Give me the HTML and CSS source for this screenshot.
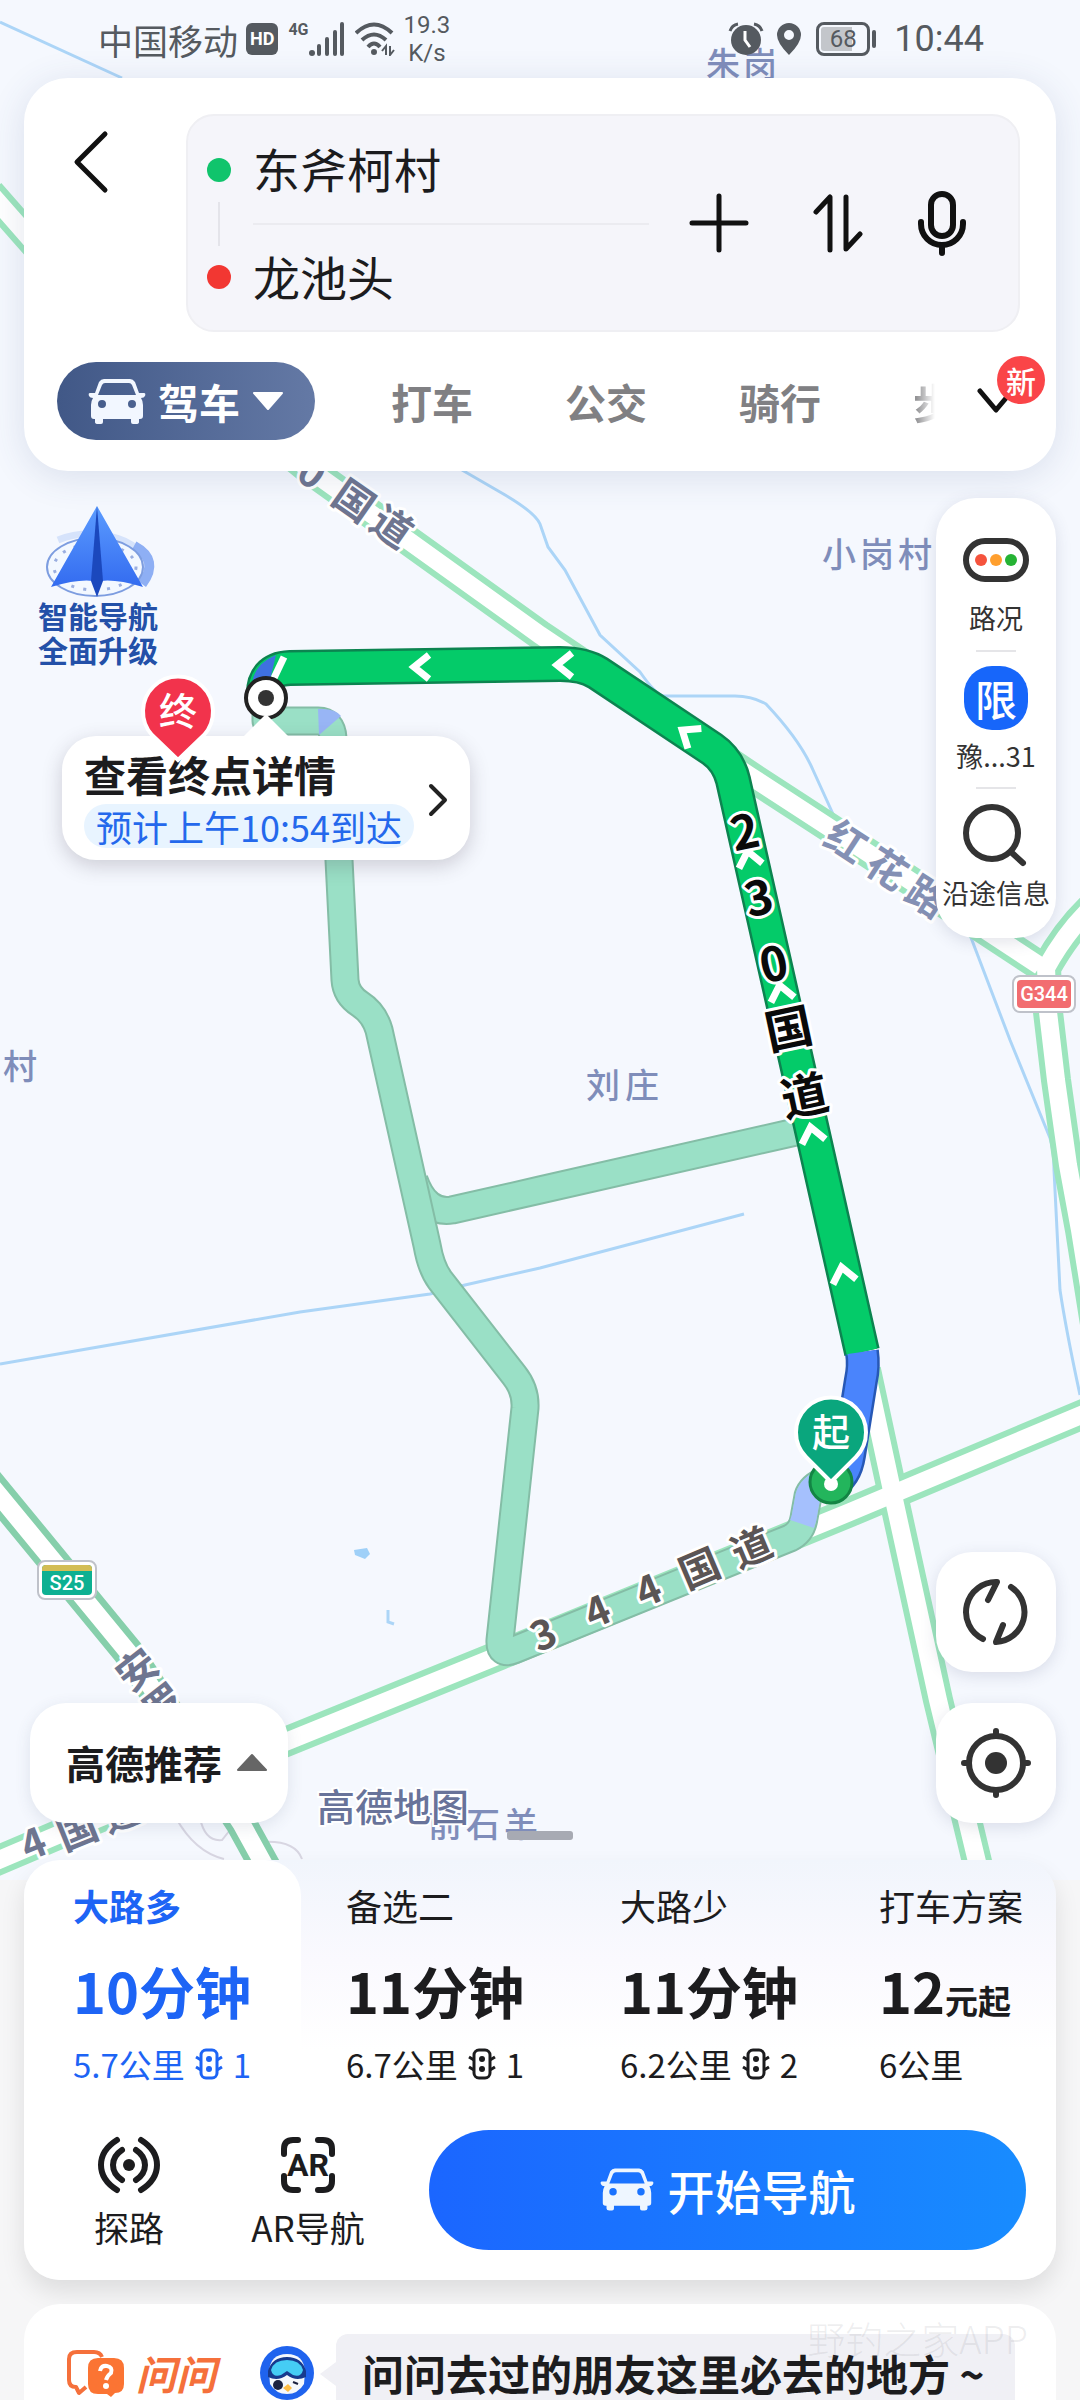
FILE: index.html
```html
<!DOCTYPE html>
<html lang="zh-CN">
  <head>
    <meta charset="UTF-8" />
    <meta name="viewport" content="width=device-width, initial-scale=1.0" />
    <title>驾车路线</title>
    <link rel="stylesheet" href="styles.css">
  </head>
  <body>
    <svg class="defs" width="0" height="0" aria-hidden="true">
      <symbol id="car" viewBox="0 0 58 46">
        <path fill-rule="evenodd" d="M16 1H42Q45 1 47 4L51 15L56 15Q58 15 57 18Q56 20 53 20Q55 23 55 27V38Q55 41 52 41H51V44Q51 46 48 46H45Q43 46 43 44V41H15V44Q15 46 13 46H10Q7 46 7 44V41H6Q3 41 3 38V27Q3 23 5 20Q2 20 1 18Q0 15 2 15H7L11 4Q13 1 16 1ZM17 5Q15 5 14 7L10 17H48L44 7Q43 5 41 5ZM14 22A4 4 0 1 0 14 30A4 4 0 1 0 14 22ZM44 22A4 4 0 1 0 44 30A4 4 0 1 0 44 22Z" />
      </symbol>
      <symbol id="light" viewBox="0 0 28 32">
        <g fill="none" stroke="currentColor" stroke-width="3">
          <rect x="6" y="2" width="16" height="28" rx="5" />
          <path d="M1 9L6 12M27 9L22 12M1 19L6 22M27 19L22 22" />
        </g>
        <circle cx="14" cy="11" r="3" fill="currentColor" />
        <circle cx="14" cy="21" r="3" fill="currentColor" />
      </symbol>
    </svg>

    <main class="app">
      <section class="map">
        <svg class="map-canvas" viewBox="0 0 1080 1880">
          <!-- water -->
          <g class="water">
            <path d="M0 22L122 78" />
            <path d="M462 470L500 492Q535 512 540 524L548 547L565 570L600 635L640 672Q656 695 664 696H735Q752 696 766 704Q800 740 813 770L838 825" />
            <path d="M970 935L1010 1040L1050 1138Q1054 1150 1054 1170L1060 1290Q1066 1330 1080 1395" />
            <path d="M0 1364L300 1312L430 1294L465 1285L540 1268L744 1214" />
            <path d="M388 1610V1622L394 1624" />
          </g>
          <path class="pond" d="M354 1550L367 1548L370 1554L365 1559L355 1555Z" />

          <!-- ramps -->
          <g class="ramp">
            <path d="M176 1818Q195 1852 224 1859" />
            <path d="M200 1818Q205 1842 222 1840L230 1830" />
            <path d="M262 1842Q295 1840 302 1859" />
          </g>

          <!-- roads -->
          <g class="road-edge">
            <path d="M-10 193L40 250L310 470L540 635L750 776L830 828L1040 966" />
            <path d="M1100 900Q1070 925 1046 968L1048 1012L1056 1080L1068 1165L1080 1230L1096 1330" />
            <path d="M-20 1868L60 1834L288 1741L500 1655L850 1512L1100 1407" />
            <path d="M866 1370L893 1495L938 1700L979 1870" />
          </g>
          <path class="road-edge expressway" d="M-20 1472L128 1652L241 1823L268 1872" />
          <g class="road-fill">
            <path d="M-10 193L40 250L310 470L540 635L750 776L830 828L1040 966" />
            <path d="M1100 900Q1070 925 1046 968L1048 1012L1056 1080L1068 1165L1080 1230L1096 1330" />
            <path d="M-20 1868L60 1834L288 1741L500 1655L850 1512L1100 1407" />
            <path d="M866 1370L893 1495L938 1700L979 1870" />
            <path d="M-20 1472L128 1652L241 1823L268 1872" />
          </g>

          <!-- alternative routes -->
          <path class="alt-edge" d="M414 1180Q426 1214 452 1210L540 1190L800 1131" />
          <path class="alt-fill" d="M414 1180Q426 1214 452 1210L540 1190L800 1131" />
          <path class="alt-edge" d="M266 698V721H318Q332 721 333 738L339 860L345 980Q346 995 360 1004Q374 1013 379 1030L427 1245Q431 1268 440 1280L514 1375Q526 1390 525 1408L500 1640Q499 1656 514 1650L790 1538Q802 1532 804 1518L808 1496Q811 1486 826 1480" />
          <path class="alt-fill" d="M266 698V721H318Q332 721 333 738L339 860L345 980Q346 995 360 1004Q374 1013 379 1030L427 1245Q431 1268 440 1280L514 1375Q526 1390 525 1408L500 1640Q499 1656 514 1650L790 1538Q802 1532 804 1518L808 1496Q811 1486 826 1480" />
          <path class="alt-blue" d="M802 1524L804 1518L808 1496Q811 1486 826 1480" />
          <path class="alt-blue-part" d="M318 709Q335 708 341 716L319 735Z" />

          <!-- chosen route -->
          <path class="route-edge" d="M264 698Q262 669 290 668L560 664Q584 664 598 673L712 749Q728 760 733 780L862 1352" />
          <path class="route-blue-edge" d="M862 1352Q864 1366 861 1380L849 1455Q846 1475 832 1483" />
          <path class="route-fill" d="M264 698Q262 669 290 668L560 664Q584 664 598 673L712 749Q728 760 733 780L862 1352" />
          <path class="route-blue" d="M862 1352Q864 1366 861 1380L849 1455Q846 1475 832 1483" />
          <path class="route-blue-part" d="M252 684Q254 664 276 655L269 684Z" />
          <g class="arrow">
            <path d="M284 657L274 678" />
            <path transform="translate(421 667)" d="M8-12L-7 0L8 12" />
            <path transform="translate(564 665)" d="M8-12L-7 0L8 12" />
            <path transform="translate(688 734) rotate(34)" d="M8-12L-7 0L8 12" />
            <path transform="translate(749 858) rotate(78)" d="M8-12L-7 0L8 12" />
            <path transform="translate(781 992) rotate(78)" d="M8-12L-7 0L8 12" />
            <path transform="translate(812 1134) rotate(78)" d="M8-12L-7 0L8 12" />
            <path transform="translate(843 1274) rotate(78)" d="M8-12L-7 0L8 12" />
          </g>

          <!-- road names -->
          <g class="road-name">
            <text transform="translate(311 474) rotate(35)" dy="13">0</text>
            <text transform="translate(353 502) rotate(35)" dy="13">国</text>
            <text transform="translate(391 528) rotate(35)" dy="13">道</text>
            <text transform="translate(138 1671) rotate(-38)" dy="13">安</text>
            <text transform="translate(165 1706) rotate(-38)" dy="13">罗</text>
            <text transform="translate(34 1845) rotate(-22)" dy="13">4</text>
            <text transform="translate(78 1832) rotate(-22)" dy="13">国</text>
            <text transform="translate(122 1814) rotate(-22)" dy="13">道</text>
          </g>
          <g class="road-name town-road">
            <text transform="translate(845 843) rotate(33)" dy="13">红</text>
            <text transform="translate(886 870) rotate(33)" dy="13">花</text>
            <text transform="translate(926 898) rotate(33)" dy="13">路</text>
          </g>
          <g class="road-name gray-road">
            <text transform="translate(544 1636) rotate(-23)" dy="13">3</text>
            <text transform="translate(598 1613) rotate(-23)" dy="13">4</text>
            <text transform="translate(649 1592) rotate(-23)" dy="13">4</text>
            <text transform="translate(700 1570) rotate(-23)" dy="13">国</text>
            <text transform="translate(752 1549) rotate(-23)" dy="13">道</text>
          </g>
          <g class="road-name route-road">
            <text transform="translate(745 833) rotate(-12)" dy="16">2</text>
            <text transform="translate(759 899) rotate(-12)" dy="16">3</text>
            <text transform="translate(774 965) rotate(-12)" dy="16">0</text>
            <text transform="translate(789 1030) rotate(-12)" dy="16">国</text>
            <text transform="translate(805 1097) rotate(-12)" dy="16">道</text>
          </g>

          <!-- places -->
          <g class="place">
            <text x="706 743" y="77">朱岗</text>
            <text x="822 860 898" y="567">小岗村</text>
            <text x="586 625" y="1098">刘庄</text>
            <text x="3" y="1079">村</text>
            <text x="428 466 504" y="1837">前石羊</text>
          </g>
          <text class="brand" x="317" y="1821">高德地图</text>
          <rect class="scale" x="507" y="1831" width="66" height="9" rx="3" />

          <!-- road shields -->
          <g class="shield">
            <rect class="shield-frame" x="38" y="1561" width="58" height="38" rx="7" />
            <rect x="42" y="1565" width="50" height="30" rx="4" fill="#0db092" />
            <path d="M42 1571V1569Q42 1565 46 1565H88Q92 1565 92 1569V1571Z" fill="#d3bd55" />
            <text x="67" y="1590">S25</text>
            <rect class="shield-frame" x="1013" y="976" width="62" height="36" rx="7" />
            <rect x="1017" y="980" width="54" height="28" rx="4" fill="#f26d70" />
            <text x="1044" y="1001">G344</text>
          </g>

          <!-- start and end -->
          <circle cx="831" cy="1482" r="21" fill="#23b55c" stroke="#138544" stroke-width="3" />
          <circle cx="831" cy="1484" r="7" fill="#fff" />
          <path class="pin start-pin" d="M831 1482L806 1457A35 35 0 1 1 856 1457Z" />
          <text class="pin-text" x="831" y="1446">起</text>
          <circle cx="266" cy="698" r="20" fill="#fff" stroke="#222" stroke-width="4" />
          <circle cx="266" cy="698" r="8" fill="#333" />
        </svg>

        <div class="overlay">
          <div class="status-bar">
            <div class="status-group">
              <span class="carrier">中国移动</span>
              <span class="hd">HD</span>
              <span class="net">4G</span>
              <svg class="signal" width="36" height="34" viewBox="0 0 36 34" fill="#555a60">
                <circle cx="3" cy="31" r="3" />
                <rect x="8" y="22" width="4" height="12" rx="2" />
                <rect x="16" y="15" width="4" height="19" rx="2" />
                <rect x="24" y="8" width="4" height="26" rx="2" />
                <rect x="31" y="0" width="4" height="34" rx="2" />
              </svg>
              <svg width="40" height="34" viewBox="0 0 40 34" fill="none" stroke="#555a60" stroke-width="4">
                <path d="M1 11Q19-6 37 11M7 18Q19 7 31 18M13 25Q19 18 25 25" />
                <circle cx="19" cy="30" r="2" fill="#555a60" stroke-width="2" />
                <path d="M31 33V24L27 29M35 24V33L39 28" stroke-width="2" />
              </svg>
              <span class="speed">19.3<br />K/s</span>
            </div>
            <div class="status-group">
              <svg width="36" height="34" viewBox="0 0 36 34">
                <circle cx="18" cy="18" r="15" fill="#555a60" />
                <path d="M2 9Q4 3 10 2M34 9Q32 3 26 2" fill="none" stroke="#555a60" stroke-width="3" />
                <path d="M17 9V18L22 25" fill="none" stroke="#fff" stroke-width="3" />
              </svg>
              <svg class="gps" width="26" height="34" viewBox="0 0 26 34">
                <path fill="#555a60" fill-rule="evenodd" d="M13 1A12 12 0 0 1 25 13Q25 21 13 33Q1 21 1 13A12 12 0 0 1 13 1ZM13 8A5 5 0 1 0 13 18A5 5 0 1 0 13 8Z" />
              </svg>
              <span class="battery">68</span>
              <time class="clock">10:44</time>
            </div>
          </div>

          <header class="search-card">
            <div class="search-row">
              <button class="back" aria-label="返回">
                <svg width="36" height="64" viewBox="0 0 36 64" fill="none" stroke="#111" stroke-width="5" stroke-linecap="round" stroke-linejoin="round">
                  <path d="M32 4L4 32L32 60" />
                </svg>
              </button>
              <div class="search-box">
                <div class="fields">
                  <label class="field"><i class="dot from"></i><input type="text" aria-label="起点" value="东斧柯村" /></label>
                  <label class="field"><i class="dot to"></i><input type="text" aria-label="终点" value="龙池头" /></label>
                </div>
                <div class="search-actions">
                  <button aria-label="添加途经点">
                    <svg width="60" height="60" viewBox="0 0 60 60" fill="none" stroke="#111" stroke-width="5" stroke-linecap="round"><path d="M3 30H57M30 3V57" /></svg>
                  </button>
                  <button aria-label="交换起终点">
                    <svg width="50" height="60" viewBox="0 0 50 60" fill="none" stroke="#111" stroke-width="5" stroke-linecap="round" stroke-linejoin="round"><path d="M3 19L17 4V57M33 4V56L47 41" /></svg>
                  </button>
                  <button aria-label="语音输入">
                    <svg width="50" height="66" viewBox="0 0 50 66" fill="none" stroke="#111" stroke-width="6" stroke-linecap="round">
                      <rect x="14" y="4" width="22" height="42" rx="11" />
                      <path d="M4 32V34A21 21 0 0 0 46 34V32M25 55V63" />
                    </svg>
                  </button>
                </div>
              </div>
            </div>
            <nav class="modes">
              <button class="mode active">
                <svg width="58" height="46"><use href="#car" fill="#f2f7ff" /></svg>
                驾车
                <svg width="32" height="18" viewBox="0 0 32 18"><path d="M2 1H30L16 17Z" fill="#fff" stroke="#fff" stroke-width="2" stroke-linejoin="round" /></svg>
              </button>
              <button class="mode">打车</button>
              <button class="mode">公交</button>
              <button class="mode">骑行</button>
              <button class="mode cut">步行</button>
              <button class="more" aria-label="更多出行方式">
                <svg width="38" height="26" viewBox="0 0 38 26" fill="none" stroke="#111" stroke-width="5" stroke-linecap="round" stroke-linejoin="round"><path d="M3 3L19 22L35 3" /></svg>
                <span class="badge">新</span>
              </button>
            </nav>
          </header>

          <div class="map-tools">
            <div class="left-tools">
              <a class="promo" href="#">
                <svg width="122" height="94" viewBox="0 0 122 94">
                  <defs>
                    <linearGradient id="wing" x1="0" y1="0" x2="0" y2="1">
                      <stop offset="0" stop-color="#5c9cff" />
                      <stop offset="1" stop-color="#2f66ee" />
                    </linearGradient>
                  </defs>
                  <path d="M20 36Q45 26 70 32Q90 36 100 46" fill="none" stroke="#d6e3fb" stroke-width="7" />
                  <path d="M96 42Q122 56 104 80" fill="none" stroke="#8eaff4" stroke-width="10" />
                  <ellipse cx="57" cy="63" rx="48" ry="29" fill="#f3f8ff" stroke="#7d9de0" stroke-width="2" />
                  <ellipse cx="57" cy="63" rx="41" ry="23" fill="none" stroke="#9aaee0" stroke-width="3" stroke-dasharray="3 9" />
                  <path d="M59 2L13 83Q40 75 55 77L59 92L63 77Q78 75 105 83Z" fill="url(#wing)" />
                  <path d="M59 2L53 77L59 93L65 77Z" fill="#1b48bd" />
                </svg>
                <span>智能导航<br />全面升级</span>
              </a>
              <button class="prefer">高德推荐
                <svg width="32" height="18" viewBox="0 0 32 18"><path d="M2 17L16 2L30 17Z" fill="#666" stroke="#666" stroke-width="2" stroke-linejoin="round" /></svg>
              </button>
            </div>
            <div class="right-tools">
              <div class="tool-card">
                <button class="tool">
                  <svg width="66" height="64" viewBox="0 0 66 64">
                    <rect x="3" y="13" width="60" height="38" rx="19" fill="#fff" stroke="#333" stroke-width="6" />
                    <circle cx="18" cy="32" r="6" fill="#f5533d" />
                    <circle cx="33" cy="32" r="6" fill="#ff9f2e" />
                    <circle cx="48" cy="32" r="6" fill="#25b334" />
                  </svg>
                  路况
                </button>
                <button class="tool">
                  <span class="limit">限</span>
                  豫...31
                </button>
                <button class="tool">
                  <svg width="66" height="64" viewBox="0 0 66 64" fill="none" stroke="#333" stroke-width="6" stroke-linecap="round">
                    <circle cx="29" cy="30" r="26" />
                    <path d="M48 49L60 60" />
                  </svg>
                  沿途信息
                </button>
              </div>
              <button class="round-tool" aria-label="刷新路线">
                <svg width="68" height="68" viewBox="0 0 68 68" fill="none" stroke="#333" stroke-width="6" stroke-linecap="round" stroke-linejoin="round">
                  <path d="M21 61A30 30 0 0 1 35 4L26 22M49 9A30 30 0 0 1 34 64L41 47" />
                </svg>
              </button>
              <button class="round-tool" aria-label="定位">
                <svg width="70" height="70" viewBox="0 0 70 70" fill="none" stroke="#333" stroke-width="6" stroke-linecap="round">
                  <circle cx="35" cy="35" r="27" />
                  <circle cx="35" cy="35" r="11" fill="#333" stroke="none" />
                  <path d="M35 3V8M35 62V67M3 35H8M62 35H67" />
                </svg>
              </button>
            </div>
          </div>

          <button class="callout">
            <span class="callout-body">
              <strong>查看终点详情</strong>
              <span class="eta">预计上午10:54到达</span>
            </span>
            <svg width="20" height="34" viewBox="0 0 20 34" fill="none" stroke="#222" stroke-width="4" stroke-linecap="round" stroke-linejoin="round"><path d="M3 3L17 17L3 31" /></svg>
          </button>
          <svg class="end-pin" width="76" height="92" viewBox="0 0 76 92">
            <path class="pin" d="M38 87L12 62A35 35 0 1 1 64 62Z" />
            <text class="pin-text" x="38" y="52">终</text>
          </svg>
        </div>
      </section>

      <section class="sheet">
        <div class="plans">
          <button class="plan active">
            <span class="plan-name">大路多</span>
            <span class="plan-time">10分钟</span>
            <span class="plan-info">5.7公里 <svg width="28" height="32"><use href="#light" /></svg> 1</span>
          </button>
          <button class="plan">
            <span class="plan-name">备选二</span>
            <span class="plan-time">11分钟</span>
            <span class="plan-info">6.7公里 <svg width="28" height="32"><use href="#light" /></svg> 1</span>
          </button>
          <button class="plan">
            <span class="plan-name">大路少</span>
            <span class="plan-time">11分钟</span>
            <span class="plan-info">6.2公里 <svg width="28" height="32"><use href="#light" /></svg> 2</span>
          </button>
          <button class="plan">
            <span class="plan-name">打车方案</span>
            <span class="plan-time">12<small>元起</small></span>
            <span class="plan-info">6公里</span>
          </button>
        </div>
        <div class="actions">
          <button class="action">
            <svg width="64" height="58" viewBox="0 0 64 58" fill="none" stroke="#1c1c1e" stroke-width="6" stroke-linecap="round">
              <path d="M20 4Q4 14 4 29T20 54M44 4Q60 14 60 29T44 54M25 14Q16 20 16 29T25 44M39 14Q48 20 48 29T39 44" />
              <circle cx="32" cy="29" r="6" fill="#1c1c1e" stroke="none" />
            </svg>
            探路
          </button>
          <button class="action">
            <svg width="64" height="58" viewBox="0 0 64 58" fill="none" stroke="#1c1c1e" stroke-width="6" stroke-linecap="round">
              <path d="M8 18V13Q8 4 17 4H22M42 4H47Q56 4 56 13V18M56 40V45Q56 54 47 54H42M22 54H17Q8 54 8 45V40" />
              <text class="ar" x="32" y="40">AR</text>
            </svg>
            AR导航
          </button>
          <button class="go">
            <svg width="54" height="46"><use href="#car" fill="#eef6ff" /></svg>
            开始导航
          </button>
        </div>
      </section>

      <section class="ask">
        <svg class="ask-logo" width="60" height="50" viewBox="0 0 60 50">
          <path d="M20 38L13 44L10 38Q3 38 3 31V10Q3 3 11 3H28Q34 3 36 8" fill="none" stroke="#f5703b" stroke-width="4" stroke-linejoin="round" />
          <path d="M32 9H48Q58 9 58 19V35Q58 44 49 44L45 48L41 45H32Q22 45 22 35V19Q22 9 32 9Z" fill="#fb7433" />
          <path d="M34 22Q35 16 41 17Q47 18 45 24Q41 27 40 31" fill="none" stroke="#fff" stroke-width="4" />
          <circle cx="40" cy="37" r="3" fill="#fff" />
        </svg>
        <strong class="ask-title">问问</strong>
        <svg class="avatar" width="54" height="54" viewBox="0 0 54 54">
          <circle cx="27" cy="27" r="27" fill="#1f63ee" />
          <path d="M9 26Q10 8 27 8T45 26L44 38Q38 48 27 48T10 38Z" fill="#f5f8fc" />
          <path d="M8 25Q12 11 27 11T46 25V31Q36 36 27 29Q18 36 8 31Z" fill="#173a8e" />
          <path d="M11 24Q14 14 27 14T43 24Q41 32 33 29L27 25L21 29Q13 32 11 24Z" fill="#45cdf5" />
          <circle cx="18" cy="39" r="5" fill="#1b2140" />
          <path d="M33 36L38 38" stroke="#1b2140" stroke-width="2" />
          <path d="M23 42L28 38L32 42L28 46Z" fill="#ffbd45" />
        </svg>
        <a class="bubble" href="#">问问去过的朋友这里必去的地方 ~</a>
        <span class="watermark">野钓之家APP</span>
      </section>
    </main>
  </body>
</html>
```
FILE: styles.css
```css
* {
  margin: 0;
  padding: 0;
  box-sizing: border-box;
}

body {
  font-family: "Noto Sans CJK SC", "Noto Sans", sans-serif;
  background-color: #f6f6f7;
  color: #1c1c1e;
}

button,
input {
  font: inherit;
  color: inherit;
  border: none;
  background: none;
}

button {
  cursor: pointer;
}

a {
  color: inherit;
  text-decoration: none;
}

svg {
  display: block;
  flex-shrink: 0;
}

.defs {
  position: absolute;
}

.app {
  overflow: hidden;
}

/* map */
.map {
  display: grid;
  position: relative;
  background-color: #f5f8fe;
}

.map-canvas,
.overlay {
  grid-area: 1 / 1;
}

.map-canvas {
  width: 100%;
  height: auto;
}

.water path {
  fill: none;
  stroke: #acd5f7;
  stroke-width: 3;
}

.pond {
  fill: #9fd0f8;
}

.ramp path {
  fill: none;
  stroke: #d8d6e2;
  stroke-width: 2;
}

.road-edge {
  fill: none;
  stroke: #9ce5bd;
  stroke-width: 30;
}

.expressway {
  stroke: #86cfab;
  stroke-width: 31;
}

.road-fill {
  fill: none;
  stroke: #fff;
  stroke-width: 18;
}

.alt-edge,
.alt-fill,
.alt-blue,
.route-edge,
.route-fill,
.route-blue,
.route-blue-edge {
  fill: none;
  stroke-linejoin: round;
}

.alt-edge {
  stroke: #84bda6;
  stroke-width: 29;
}

.alt-fill {
  stroke: #9ae0c6;
  stroke-width: 25;
}

.alt-blue {
  stroke: #a5c0fd;
  stroke-width: 25;
}

.alt-blue-part {
  fill: #98b5f5;
}

.route-edge {
  stroke: #0c8450;
  stroke-width: 36;
}

.route-fill {
  stroke: #04cb69;
  stroke-width: 31;
}

.route-blue-edge {
  stroke: #2758b5;
  stroke-width: 34;
}

.route-blue {
  stroke: #4a84fc;
  stroke-width: 29;
}

.route-blue-part {
  fill: #3f70e0;
}

.arrow path {
  fill: none;
  stroke: #fff;
  stroke-width: 7;
}

.road-name {
  font-size: 40px;
  font-weight: 700;
  text-anchor: middle;
  fill: #6e7590;
  stroke: #fff;
  stroke-width: 6;
  stroke-linejoin: round;
  paint-order: stroke;
}

.town-road {
  fill: #8490b4;
}

.gray-road {
  fill: #5b5555;
}

.route-road {
  font-size: 47px;
  fill: #0a0a0a;
}

.place {
  font-size: 34px;
  font-weight: 500;
  fill: #7f8dba;
}

.brand {
  font-size: 38px;
  font-weight: 500;
  fill: #68739a;
  stroke: #fff;
  stroke-width: 4;
  paint-order: stroke;
}

.scale {
  fill: #a7aab3;
}

.shield text {
  font-family: Roboto, sans-serif;
  font-size: 20px;
  font-weight: 500;
  text-anchor: middle;
  fill: #fff;
}

.shield-frame {
  fill: #fff;
  stroke: #bfc2ca;
  stroke-width: 2;
}

.pin {
  fill: #f2334c;
  stroke: #fff;
  stroke-width: 4;
}

.start-pin {
  fill: #0aa67d;
}

.pin-text {
  font-size: 38px;
  font-weight: 500;
  text-anchor: middle;
  fill: #fff;
}

.overlay {
  display: flex;
  flex-direction: column;
  position: relative;
}

/* status bar */
.status-bar {
  display: flex;
  justify-content: space-between;
  height: 78px;
  padding: 0 96px 0 98px;
  color: #555a60;
}

.status-group {
  display: flex;
  align-items: center;
}

.carrier {
  font-size: 35px;
}

.hd {
  margin: 0 10px 0 8px;
  padding: 0 4px;
  border-radius: 6px;
  background-color: #555a60;
  color: #fff;
  font: 700 18px/32px Roboto, sans-serif;
}

.net {
  align-self: flex-start;
  margin-top: 20px;
  font: 700 16px/20px Roboto, sans-serif;
}

.signal {
  margin-right: 10px;
}

.speed {
  margin-left: 9px;
  font: 24px/28px Roboto, sans-serif;
  text-align: center;
}

.gps {
  margin: 0 14px 0 12px;
}

.battery {
  position: relative;
  width: 54px;
  margin-right: 24px;
  border: 3px solid #555a60;
  border-radius: 8px;
  background: linear-gradient(90deg, #c3c6cb 68%, transparent 68%);
  background-clip: content-box;
  padding: 2px;
  font: 24px/24px Roboto, sans-serif;
  text-align: center;
}

.battery::after {
  content: "";
  position: absolute;
  top: 5px;
  right: -9px;
  width: 4px;
  height: 18px;
  border-radius: 2px;
  background-color: #555a60;
}

.clock {
  font: 36px/40px Roboto, sans-serif;
}

/* search card */
.search-card {
  margin: 0 24px;
  padding: 36px 36px 31px 33px;
  border-radius: 44px;
  background-color: #fff;
  box-shadow: 0 6px 36px rgba(60, 75, 130, 0.14);
}

.search-row {
  display: flex;
  align-items: flex-start;
}

.back {
  width: 129px;
  padding: 16px 0 0 16px;
}

.search-box {
  flex: 1;
  display: flex;
  align-items: center;
  padding: 0 51px 0 19px;
  border: 2px solid #efeff3;
  border-radius: 28px;
  background-color: #f5f5fa;
}

.fields {
  flex: 1;
  position: relative;
}

.fields::before {
  content: "";
  position: absolute;
  left: 11px;
  top: 86px;
  width: 2px;
  height: 44px;
  background-color: #e4e4ea;
}

.field {
  display: flex;
  align-items: center;
  height: 107px;
}

.field + .field input {
  border-top: 2px solid #ebebf0;
}

.dot {
  width: 24px;
  height: 24px;
  margin-right: 22px;
  border-radius: 50%;
  background-color: #10c46c;
}

.dot.to {
  background-color: #f23732;
}

.field input {
  flex: 1;
  width: 0;
  height: 108px;
  padding-bottom: 4px;
  font-size: 47px;
  outline: none;
}

.search-actions {
  display: flex;
  align-items: center;
  gap: 54px;
  margin-left: 40px;
}

.search-actions button:first-child {
  margin-right: 10px;
}

.modes {
  display: flex;
  align-items: center;
  gap: 92px;
  margin-top: 30px;
}

.mode {
  font-size: 41px;
  font-weight: 700;
  line-height: 60px;
  color: #808083;
  white-space: nowrap;
}

.mode.active {
  display: flex;
  align-items: center;
  gap: 12px;
  height: 78px;
  margin-right: -16px;
  padding: 0 31px;
  border-radius: 39px;
  background: linear-gradient(90deg, #415887, #6479a5);
  color: #fff;
}

.mode.cut {
  width: 22px;
  overflow: hidden;
  text-align: left;
  -webkit-mask-image: linear-gradient(90deg, #000, transparent);
  mask-image: linear-gradient(90deg, #000, transparent);
}

.more {
  position: relative;
  margin-left: -50px;
}

.badge {
  position: absolute;
  left: 20px;
  bottom: 10px;
  width: 48px;
  border-radius: 24px;
  background-color: #fa4548;
  color: #fff;
  font-size: 30px;
  font-weight: 500;
  line-height: 48px;
}

/* floating tools */
.map-tools {
  flex: 1;
  display: flex;
  justify-content: space-between;
  padding: 27px 24px 57px 30px;
}

.left-tools,
.right-tools {
  display: flex;
  flex-direction: column;
  justify-content: space-between;
}

.promo {
  margin: 6px 0 0 8px;
  color: #2350a8;
  font-size: 30px;
  font-weight: 700;
  line-height: 34px;
}

.prefer {
  display: flex;
  align-items: center;
  gap: 14px;
  height: 120px;
  padding: 0 20px 2px 36px;
  border-radius: 36px;
  background-color: #fff;
  box-shadow: 0 4px 16px rgba(60, 70, 110, 0.12);
  font-size: 39px;
  font-weight: 700;
}

.right-tools {
  width: 120px;
  gap: 31px;
}

.tool-card {
  margin-bottom: auto;
  padding: 30px 0 14px;
  border-radius: 40px;
  background-color: #fff;
  box-shadow: 0 4px 16px rgba(60, 70, 110, 0.15);
}

.tool {
  display: flex;
  flex-direction: column;
  align-items: center;
  gap: 6px;
  width: 100%;
  height: 122px;
  font-size: 27px;
  line-height: 40px;
  white-space: nowrap;
  color: #333;
}

.tool + .tool {
  height: 137px;
}

.tool + .tool::before {
  content: "";
  width: 40px;
  height: 2px;
  margin-bottom: 8px;
  background-color: #e5e5e8;
}

.limit {
  width: 64px;
  border-radius: 28px;
  background-color: #1766fa;
  color: #fff;
  font-size: 42px;
  font-weight: 500;
  line-height: 64px;
}

.round-tool {
  display: flex;
  align-items: center;
  justify-content: center;
  height: 120px;
  border-radius: 36px;
  background-color: #fff;
  box-shadow: 0 4px 16px rgba(60, 70, 110, 0.15);
}

/* destination callout, pinned to the map */
.callout {
  position: absolute;
  left: 62px;
  top: 736px;
  display: flex;
  align-items: center;
  gap: 14px;
  padding: 8px 22px 12px;
  border-radius: 34px;
  background-color: #fff;
  box-shadow: 0 6px 20px rgba(60, 50, 70, 0.22);
  text-align: left;
}

.callout svg {
  margin-top: 8px;
}

.callout::before {
  content: "";
  position: absolute;
  left: 182px;
  top: -22px;
  border: 22px solid transparent;
  border-top: none;
  border-bottom-color: #fff;
}

.callout-body strong {
  display: block;
  font-size: 42px;
  font-weight: 700;
  line-height: 60px;
}

.eta {
  display: block;
  padding: 0 12px;
  border-radius: 22px;
  background-color: #e8f4ff;
  color: #2468ec;
  font-size: 36px;
  line-height: 44px;
}

.end-pin {
  position: absolute;
  left: 140px;
  top: 673px;
}

/* route sheet */
.sheet {
  position: relative;
  margin: -20px 24px 0;
  border-radius: 36px;
  background: linear-gradient(#f1f5fc, #faf9fe 100px, #fff 190px);
  box-shadow: 0 12px 24px rgba(0, 0, 0, 0.1);
}

.plans {
  display: grid;
  grid-template-columns: 273fr 274fr 259fr 226fr;
}

.plan {
  display: flex;
  flex-direction: column;
  align-items: flex-start;
  height: 240px;
  padding: 20px 0 0 49px;
  white-space: nowrap;
}

.plan.active {
  margin-right: -4px;
  border-radius: 36px 36px 0 0;
  background-color: #fff;
  color: #1d64f5;
}

.plan-name {
  font-size: 36px;
  line-height: 50px;
}

.plan.active .plan-name {
  font-weight: 700;
}

.plan-time {
  height: 80px;
  margin-top: 20px;
  font-size: 56px;
  font-weight: 700;
  line-height: 80px;
}

.plan-time small {
  font-size: 33px;
}

.plan-info {
  display: flex;
  align-items: center;
  gap: 10px;
  margin-top: 12px;
  font-size: 33px;
  line-height: 44px;
}

.actions {
  display: flex;
  align-items: center;
  padding: 30px 30px 30px 50px;
}

.action {
  display: flex;
  flex-direction: column;
  align-items: center;
  gap: 10px;
  width: 110px;
  margin-right: 66px;
  padding-top: 6px;
  font-size: 35px;
  line-height: 46px;
  white-space: nowrap;
}

.action:first-child {
  margin-right: 69px;
}

.ar {
  font-family: Roboto, sans-serif;
  font-size: 32px;
  font-weight: 700;
  text-anchor: middle;
  fill: #1c1c1e;
  stroke: none;
}

.go {
  flex: 1;
  display: flex;
  align-items: center;
  justify-content: center;
  gap: 14px;
  height: 120px;
  padding-bottom: 2px;
  border-radius: 60px;
  background: linear-gradient(90deg, #1b66ff, #188cff);
  color: #fff;
  font-size: 47px;
  font-weight: 500;
}

/* ask bar */
.ask {
  position: relative;
  display: flex;
  align-items: flex-start;
  margin: 24px 24px 0;
  padding: 30px 41px 0 42px;
  border-radius: 36px 36px 0 0;
  background-color: #fff;
}

.ask-logo {
  margin-top: 15px;
}

.ask-title {
  margin: 12px 44px 0 10px;
  color: #f5703b;
  font-size: 40px;
  font-style: italic;
  line-height: 54px;
}

.avatar {
  margin: 12px 22px 0 0;
}

.bubble {
  position: relative;
  flex: 1;
  height: 66px;
  padding: 12px 0 0 26px;
  border-radius: 12px 12px 0 0;
  background-color: #f0f0f5;
  font-size: 42px;
  font-weight: 700;
  line-height: 54px;
  white-space: nowrap;
}

.bubble::before {
  content: "";
  position: absolute;
  left: -16px;
  top: 28px;
  border: 12px solid transparent;
  border-left: none;
  border-right: 16px solid #f0f0f5;
}

.watermark {
  position: absolute;
  right: 28px;
  top: 6px;
  color: rgba(120, 120, 130, 0.13);
  font-size: 38px;
  font-weight: 300;
  line-height: 56px;
}
```
